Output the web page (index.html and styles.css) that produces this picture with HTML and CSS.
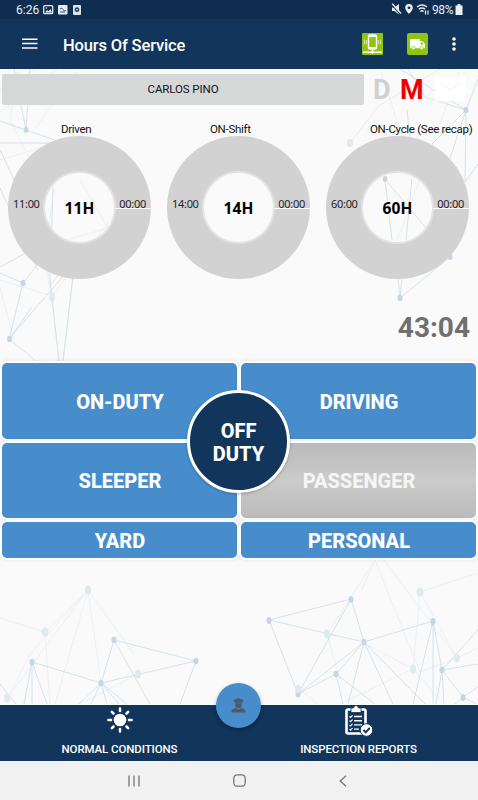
FILE: index.html
```html
<!DOCTYPE html>
<html lang="en">
<head>
  <meta charset="UTF-8" />
  <title>Hours Of Service</title>
  <meta name="viewport" content="width=device-width, initial-scale=1" />
  <link rel="stylesheet" href="styles.css">
</head>
<body>

  <div class="status-bar">
    <span class="clock">6:26</span>
    <svg width="40" height="12" viewBox="0 0 40 12">
      <rect x=".7" y="1.7" width="9" height="8" rx="1" fill="none" stroke="#e4edf4" stroke-width="1.3"/>
      <path d="M2 8.5 4 6l1.500 1.200L7.500 5 9 8.500z" fill="#e4edf4"/>
      <circle cx="3.500" cy="4" r=".8" fill="#e4edf4"/>
      <rect x="15" y="1" width="9.500" height="9.500" rx="1" fill="#e4edf4"/>
      <path d="M17 5q2-2 3 .500t3 1M17 8h5" fill="none" stroke="#34516e"/>
      <rect x="30" y="1" width="8" height="10" rx="1" fill="#d9e6ef"/>
      <circle cx="34" cy="5.700" r="2.400" fill="#24435f"/>
      <path d="M33 5.700h2" stroke="#d9e6ef"/>
    </svg>
    <svg class="status-right" width="40" height="13" viewBox="0 0 40 13">
      <path d="M1 4.500h2.500L8 1v10.500L3.500 8H1z" fill="#e8eff5"/>
      <path d="M1 2 9.500 11.500" stroke="#0f2d4e" stroke-width="1.200"/>
      <path d="M1.200 .8 10 10.500" stroke="#e8eff5" stroke-width="1.300"/>
      <path d="M18 1a3.800 3.800 0 0 0-3.800 3.800C14.200 7.500 18 11 18 11s3.800-3.500 3.800-6.200A3.800 3.800 0 0 0 18 1zm0 2.400a1.400 1.400 0 1 1 0 2.900 1.400 1.400 0 0 1 0-2.900z" fill="#e8eff5" fill-rule="evenodd"/>
      <path d="M26 4q5-4 10 0M27.700 6.300q3.300-2.600 6.400 0M29.400 8.400q1.600-1.400 3.200 0" fill="none" stroke="#e8eff5" stroke-width="1.300"/>
      <path d="M34.500 7.500v4M37 7.500v4" stroke="#e8eff5" stroke-width="1.200"/>
    </svg>
    <span class="battery">98%</span>
    <svg width="8" height="12" viewBox="0 0 8 12"><path d="M2.500 0h3v1.500H7.500V11H.5V1.500h2z" fill="#e8eff5"/></svg>
  </div>

  <header class="app-bar">
    <svg class="menu" width="16" height="12" viewBox="0 0 16 12"><path d="M0 1.300h15.500M0 5.600h15.500M0 9.900h15.500" stroke="#fff" stroke-width="1.500"/></svg>
    <h1>Hours Of Service</h1>
    <svg class="bar-icon" width="21" height="22" viewBox="0 0 21 22">
      <rect width="21" height="22" rx="1" fill="#8fc412"/>
      <rect x="6.500" y="2" width="8" height="14" rx="1.400" fill="none" stroke="#fff" stroke-width="1.400"/>
      <path d="M6 3.200h9M6 14.700h9M10.500 16v3M1 19.300h19" stroke="#fff" stroke-width="1.400"/>
      <circle cx="10.500" cy="19.300" r="1.400" fill="#fff"/>
      <path d="M4.500 7v4M2.500 6.500v5M16.500 7v4M18 6.500q1.300 2.500 0 5" fill="none" stroke="#e4f3bd" stroke-width=".8"/>
    </svg>
    <svg class="bar-icon" width="21" height="22" viewBox="0 0 21 22">
      <rect width="21" height="22" rx="2" fill="#8fc412"/>
      <path d="M4.300 6h8.500v2h2.700l2.500 3.300v4H3V7.300Q3 6 4.300 6z" fill="#fff"/>
      <path d="M13.600 9.200h1.600l1.600 2.200h-3.200z" fill="#8fc412"/>
      <circle cx="6.500" cy="15" r="1.700" fill="#fff" stroke="#8fc412" stroke-width=".7"/>
      <circle cx="14.500" cy="15" r="1.700" fill="#fff" stroke="#8fc412" stroke-width=".7"/>
    </svg>
    <svg width="4" height="14" viewBox="0 0 4 14" fill="#fff"><circle cx="2" cy="2" r="1.800"/><circle cx="2" cy="7" r="1.800"/><circle cx="2" cy="12" r="1.800"/></svg>
  </header>

  <main>
    <!-- network pattern behind the content, page coordinates -->
    <svg class="network" width="478" height="636" viewBox="0 69 478 636">
      <g class="faint">
        <path d="M0 90 36 69M0 112 58 69M18 69 10 120 40 180M34 130 78 69M0 160 60 142M30 200 52 296 110 220M80 180 108 228 60 242M0 280 52 296M73 280 63 361M48 270 59 361M54 190 44 260M0 287 14 340M350 143 380 105 440 69M350 143 367 120M380 69 410 160M460 69 390 260"/>
        <path d="M0 618 45 632 88 590 134 654M45 632 50 704M88 590 55 704M88 590 102 690M88 590 30 654 7 700M88 590 8 697M138 674 80 704M327 634 375 560 420 672 457 658 478 648M375 560 362 590M384 560 457 658M420 592 478 573M420 592 413 669M420 592 457 658M364 643 413 669 340 704M297 687 318 704M413 669 440 700M327 634 340 680"/>
      </g>
      <g class="line">
        <path d="M0 121 26 130 14 69M26 130 30 69M26 130 55 140M0 143H55M0 150 16 184M0 188 38 270M0 267 24 254M0 273 23 283 38 264M23 283 9 339 32 307M9 339 65 274M9 339 36 361M53 187 50 280M50 285 70 262M73 275 63 361M50 280 59 361"/>
        <path d="M385 179 392 240M385 179 426 228M412 178 406 240M466 110 400 69M466 110 478 79M466 110 432 144M466 110 450 158M466 110 465 182 478 164M407 110 410 140M398 278 400 298 450 257M402 278 400 298M408 69 425 97 466 110"/>
        <path d="M32 662 101 683 196 661 114 640 101 683 79 704M32 662 24 704M32 662V704M32 662 47 704M101 683 91 704M101 683 107 704M101 683 119 704M101 683 127 704M114 640 150 704M196 661 180 704M0 684 16 704"/>
        <path d="M269 620 351 599 364 642ZM269 620 298 694 351 599M298 694 364 642 336 674 298 694M336 674 343 704M336 674 375 704M364 642 348 704M364 642 393 704M364 642 425 704M364 642 433 621 413 704M433 621V704M433 621 442 670 478 664M442 670 478 630M442 670 463 697 478 687M442 670 436 704M442 670 444 704M463 697 455 704M463 697 476 704"/>
      </g>
      <g class="dots">
        <ellipse cx="26" cy="130" rx="2.300" ry="3"/><ellipse cx="23" cy="283" rx="2.500" ry="3.300"/><ellipse cx="9.500" cy="339" rx="2.500" ry="3.300"/>
        <ellipse cx="385" cy="179" rx="2.300" ry="3"/><ellipse cx="466" cy="110" rx="2.500" ry="3"/><ellipse cx="450" cy="257" rx="2.500" ry="3"/><ellipse cx="400" cy="298" rx="2.500" ry="3.300"/>
        <ellipse cx="32" cy="662" rx="2.500" ry="3.300"/><ellipse cx="114" cy="640" rx="2.500" ry="3.300"/><ellipse cx="101" cy="683" rx="2.500" ry="3.300"/><ellipse cx="196" cy="661" rx="2.500" ry="3.300"/>
        <ellipse cx="269" cy="620.500" rx="2.500" ry="3.500"/><ellipse cx="351" cy="599.500" rx="2.500" ry="3.500"/><ellipse cx="364" cy="642" rx="2.500" ry="3.300"/><ellipse cx="336" cy="674" rx="2.500" ry="3.300"/><ellipse cx="298" cy="694" rx="2.500" ry="3.500"/><ellipse cx="433" cy="621.500" rx="2.500" ry="3.500"/><ellipse cx="442" cy="670" rx="2.500" ry="3.500"/><ellipse cx="463" cy="697.500" rx="2.500" ry="3.500"/>
      </g>
      <g class="dots pale">
        <ellipse cx="381" cy="147" rx="2.500" ry="3"/><ellipse cx="350" cy="143" rx="3.200" ry="4"/><ellipse cx="52" cy="297" rx="3" ry="5"/><ellipse cx="36" cy="216" rx="2.500" ry="4"/>
        <ellipse cx="88" cy="590" rx="3.200" ry="4.500"/><ellipse cx="45" cy="632" rx="3.500" ry="4.500"/><ellipse cx="138" cy="674" rx="3" ry="4.500"/><ellipse cx="7" cy="698" rx="3" ry="4.500"/>
        <ellipse cx="327" cy="634" rx="3" ry="4.500"/><ellipse cx="420" cy="592" rx="3.500" ry="4.500"/><ellipse cx="413" cy="669" rx="3" ry="4.500"/><ellipse cx="457" cy="658" rx="3" ry="4"/><ellipse cx="298" cy="689" rx="3" ry="4"/>
      </g>
    </svg>

    <div class="driver-row">
      <button class="driver">CARLOS PINO</button>
      <span class="letter">D</span>
      <span class="letter red">M</span>
      <svg class="mail" width="31" height="24" viewBox="0 0 31 24"><rect width="31" height="24" rx="2" fill="#fff"/><path d="m3 4 12.500 9L28 4" fill="none" stroke="#f5f7f8" stroke-width="1.500"/></svg>
    </div>

    <div class="gauges">
      <div class="gauge">
        <div class="gauge-label driven">Driven</div>
        <div class="ring"><span>11:00</span><b>11H</b><span class="used">00:00</span></div>
      </div>
      <div class="gauge">
        <div class="gauge-label shift">ON-Shift</div>
        <div class="ring"><span>14:00</span><b>14H</b><span class="used">00:00</span></div>
      </div>
      <div class="gauge">
        <div class="gauge-label cycle">ON-Cycle (See recap)</div>
        <div class="ring"><span>60:00</span><b>60H</b><span class="used">00:00</span></div>
      </div>
    </div>

    <div class="timer">43:04</div>

    <div class="duty-grid">
      <button class="duty">ON-DUTY</button>
      <button class="duty">DRIVING</button>
      <button class="duty">SLEEPER</button>
      <button class="duty disabled">PASSENGER</button>
      <button class="duty">YARD</button>
      <button class="duty">PERSONAL</button>
      <button class="off-duty">OFF<br>DUTY</button>
    </div>
  </main>

  <footer class="bottom-bar">
    <div class="tab">
      <svg width="28" height="28" viewBox="-14 -14 28 28">
        <circle r="6.300" fill="#fff"/>
        <path d="M0-9v-2.600M0 9v2.600M-9 0h-2.600M9 0h2.600M-6.500-6.500l-1.700-1.700M6.500-6.500l1.700-1.700M-6.500 6.500l-1.700 1.700M6.500 6.500l1.700 1.700" stroke="#fff" stroke-width="2.500" stroke-linecap="round"/>
      </svg>
      <span>NORMAL CONDITIONS</span>
    </div>
    <div class="tab reports">
      <svg width="28" height="32" viewBox="0 0 28 32">
        <rect x="1.500" y="4.500" width="19" height="24" rx="1.500" fill="none" stroke="#fff" stroke-width="2.600"/>
        <path d="M6 3h2.500q.5-2.500 2.500-2.500T13.500 3H16v4.500H6z" fill="#fff" stroke="#12355b" stroke-width=".8"/>
        <path d="M9 11.500h8M9 15.700h8M9 19.900h8M9 24.100h5" stroke="#fff" stroke-width="1.400"/>
        <path d="m4.500 11.500 1 1 2-2M4.500 15.700l1 1 2-2M4.500 19.900l1 1 2-2M4.500 24.100l1 1 2-2" fill="none" stroke="#fff" stroke-width="1.100"/>
        <circle cx="21.500" cy="25" r="6.300" fill="#fff" stroke="#12355b"/>
        <path d="m18.500 25 2.200 2.300 4-4.300" fill="none" stroke="#12355b" stroke-width="1.900"/>
      </svg>
      <span>INSPECTION REPORTS</span>
    </div>
    <button class="fab">
      <svg width="17" height="17" viewBox="0 0 17 17" fill="#4d5a66">
        <path d="M3.500 3.200 8.500 1l5 2.200-1.200 2.600H4.700z"/>
        <path d="M5.300 6.300h6.400v1.500a3.200 3.500 0 0 1-6.400 0z"/>
        <path d="M1.500 15.500q-.5-3.700 4.500-4.500l2.500 1.500L11 11q5 .8 4.500 4.500z"/>
      </svg>
    </button>
  </footer>

  <nav class="system-nav">
    <svg width="12" height="12" viewBox="0 0 12 12"><path d="M1 .5v11M6 .5v11M11 .5v11" stroke="#767676" stroke-width="1.300"/></svg>
    <svg width="13" height="13" viewBox="0 0 13 13"><rect x=".8" y=".8" width="11.400" height="11.400" rx="3.500" fill="none" stroke="#767676" stroke-width="1.300"/></svg>
    <svg width="8" height="12" viewBox="0 0 8 12"><path d="M7 .7 1.200 6 7 11.300" fill="none" stroke="#767676" stroke-width="1.300"/></svg>
  </nav>

</body>
</html>
```
FILE: styles.css
```css
* {
  box-sizing: border-box;
}

body {
  margin: 0;
  height: 800px;
  display: flex;
  flex-direction: column;
  overflow: hidden;
  font-family: Roboto, sans-serif;
  background-color: #fafafa;
}

svg {
  display: block;
  flex: none;
}

button {
  border: none;
  padding: 0;
  margin: 0;
  font-family: inherit;
}

.status-bar {
  height: 19px;
  padding: 0 15px 0 16px;
  display: flex;
  align-items: center;
  background-color: #0f2d4e;
  color: #e8eff5;
  font-size: 12px;
}

.clock {
  width: 27px;
}

.status-right {
  margin-left: auto;
}

.battery {
  width: 23px;
  margin-left: 1px;
  font-size: 12px;
  letter-spacing: -0.4px;
}

.app-bar {
  height: 50px;
  padding: 0 22px;
  display: flex;
  align-items: center;
  background-color: #12355b;
}

h1 {
  flex: 1;
  margin: 2px 0 0 25px;
  color: white;
  font-size: 16.5px;
  font-weight: 500;
  letter-spacing: -0.15px;
}

.bar-icon {
  margin-right: 24px;
}

main {
  position: relative;
  height: 636px;
}

.network {
  position: absolute;
  top: 0;
  left: 0;
}

.network path {
  fill: none;
}

.line {
  stroke: #ccdce4;
  stroke-width: 0.8;
}

.faint {
  stroke: #e8eef0;
  stroke-width: 0.8;
}

.dots {
  fill: #c5d8e1;
}

.pale {
  fill: #e0eaed;
}

.driver-row,
.gauges,
.timer,
.duty-grid {
  position: relative;
}

.driver-row {
  height: 40px;
  padding: 0 2px;
  display: flex;
  align-items: center;
}

.driver {
  width: 362px;
  height: 31px;
  background-color: #d6d7d7;
  border-radius: 2px;
  color: #111;
  font-size: 11.5px;
  letter-spacing: -0.1px;
}

.letter {
  width: 27px;
  margin-left: 9px;
  padding-top: 2px;
  font-size: 27px;
  font-weight: bold;
  color: #d0d0d0;
}

.red {
  margin-left: 0;
  color: #f00000;
}

.mail {
  margin-left: 8px;
}

.gauges {
  display: flex;
  gap: 16px;
  padding: 13px 8px 0;
}

.gauge {
  width: 143px;
}

.gauge-label {
  height: 14px;
  line-height: 15px;
  font-size: 11.5px;
  letter-spacing: -0.3px;
  white-space: nowrap;
  color: #111;
}

.driven {
  padding-left: 53px;
}

.shift {
  padding-left: 43px;
}

.cycle {
  padding-left: 44px;
}

.ring {
  width: 143px;
  height: 143px;
  padding: 0 5px;
  display: flex;
  align-items: center;
  justify-content: space-between;
  border-radius: 50%;
  background:
    linear-gradient(#fafafa, #fafafa) right 72px / 36px 1px no-repeat,
    radial-gradient(circle, transparent 34px, #e2e2e2 35px, #e2e2e2 36px, #d2d2d2 37px);
  font-family: "Noto Sans", sans-serif;
  font-size: 11px;
  letter-spacing: -0.3px;
  color: #222;
}

.ring span {
  padding-bottom: 9px;
}

.ring b {
  font-size: 15.5px;
  letter-spacing: 0.1px;
  color: #000;
}

.timer {
  height: 84px;
  padding: 31px 8px 0;
  text-align: right;
  font-size: 28px;
  line-height: 36px;
  font-weight: bold;
  color: #707070;
}

.duty-grid {
  display: grid;
  grid-template-columns: 1fr 1fr;
  grid-template-rows: 75.5px 75.5px 36px;
  gap: 4px;
  padding: 0 2px;
}

.duty {
  padding: 2px 0 0 1px;
  background-color: #478dcc;
  border-radius: 5px;
  box-shadow: 0 0 0 2px #fff, 0 0 4px 2px rgba(0,0,0,0.1);
  color: white;
  font-size: 20px;
  font-weight: 800;
}

.disabled {
  background: linear-gradient(#bababa, #cbcbcb 50%, #bababa);
  color: #f5f5f5;
}

.off-duty {
  position: absolute;
  top: 27px;
  left: 187px;
  width: 103px;
  height: 103px;
  padding-top: 2px;
  border: 3px solid white;
  border-radius: 50%;
  background-color: #12355b;
  box-shadow: 0 1px 3px rgba(0,0,0,0.25);
  color: white;
  font-size: 20px;
  line-height: 23px;
  font-weight: 800;
}

.bottom-bar {
  position: relative;
  height: 56px;
  display: flex;
  background-color: #12355b;
}

.tab {
  flex: 1;
  display: flex;
  flex-direction: column;
  align-items: center;
  justify-content: space-between;
  padding: 1px 0 4px;
  color: white;
  font-size: 11.5px;
  font-weight: 500;
  letter-spacing: -0.1px;
}

.tab span {
  line-height: 15px;
}

.reports {
  padding-top: 0;
}

.fab {
  position: absolute;
  top: -22px;
  left: 216px;
  width: 45px;
  height: 45px;
  display: flex;
  align-items: center;
  justify-content: center;
  border-radius: 50%;
  background-color: #478dcc;
  box-shadow: 0 2px 4px rgba(0,0,0,0.3);
}

.system-nav {
  height: 39px;
  padding: 0 131px 0 128px;
  display: flex;
  align-items: center;
  justify-content: space-between;
  background-color: #f1f1f1;
}
```
